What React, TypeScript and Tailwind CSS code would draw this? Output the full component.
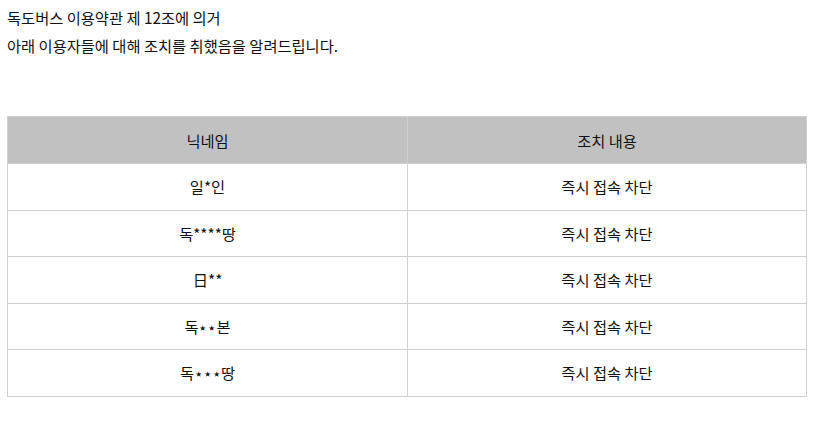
export default function App() {
  const rows = [
    ["일*인", "즉시 접속 차단"],
    ["독****땅", "즉시 접속 차단"],
    ["日**", "즉시 접속 차단"],
    ["독⋆⋆본", "즉시 접속 차단"],
    ["독⋆⋆⋆땅", "즉시 접속 차단"],
  ];
  return (
    <div
      className="px-[7px] pt-[3px] text-[15.3px] text-[#111]"
      style={{ fontFamily: '"Noto Sans CJK KR", "Noto Sans", sans-serif' }}
    >
      <p className="leading-[28px]">독도버스 이용약관 제 12조에 의거</p>
      <p className="leading-[28px]">아래 이용자들에 대해 조치를 취했음을 알려드립니다.</p>
      <table className="mt-[57px] w-[800px] border-collapse">
        <thead>
          <tr className="bg-[#c1c1c1]">
            <th className="h-[47px] w-[400px] border border-[#d0d0d0] p-0 text-center font-normal">닉네임</th>
            <th className="h-[47px] border border-[#d0d0d0] p-0 text-center font-normal">조치 내용</th>
          </tr>
        </thead>
        <tbody>
          {rows.map((r, i) => (
            <tr key={i}>
              <td className="h-[46.5px] border border-[#d0d0d0] p-0 text-center">{r[0]}</td>
              <td className="h-[46.5px] border border-[#d0d0d0] p-0 text-center">{r[1]}</td>
            </tr>
          ))}
        </tbody>
      </table>
    </div>
  );
}
